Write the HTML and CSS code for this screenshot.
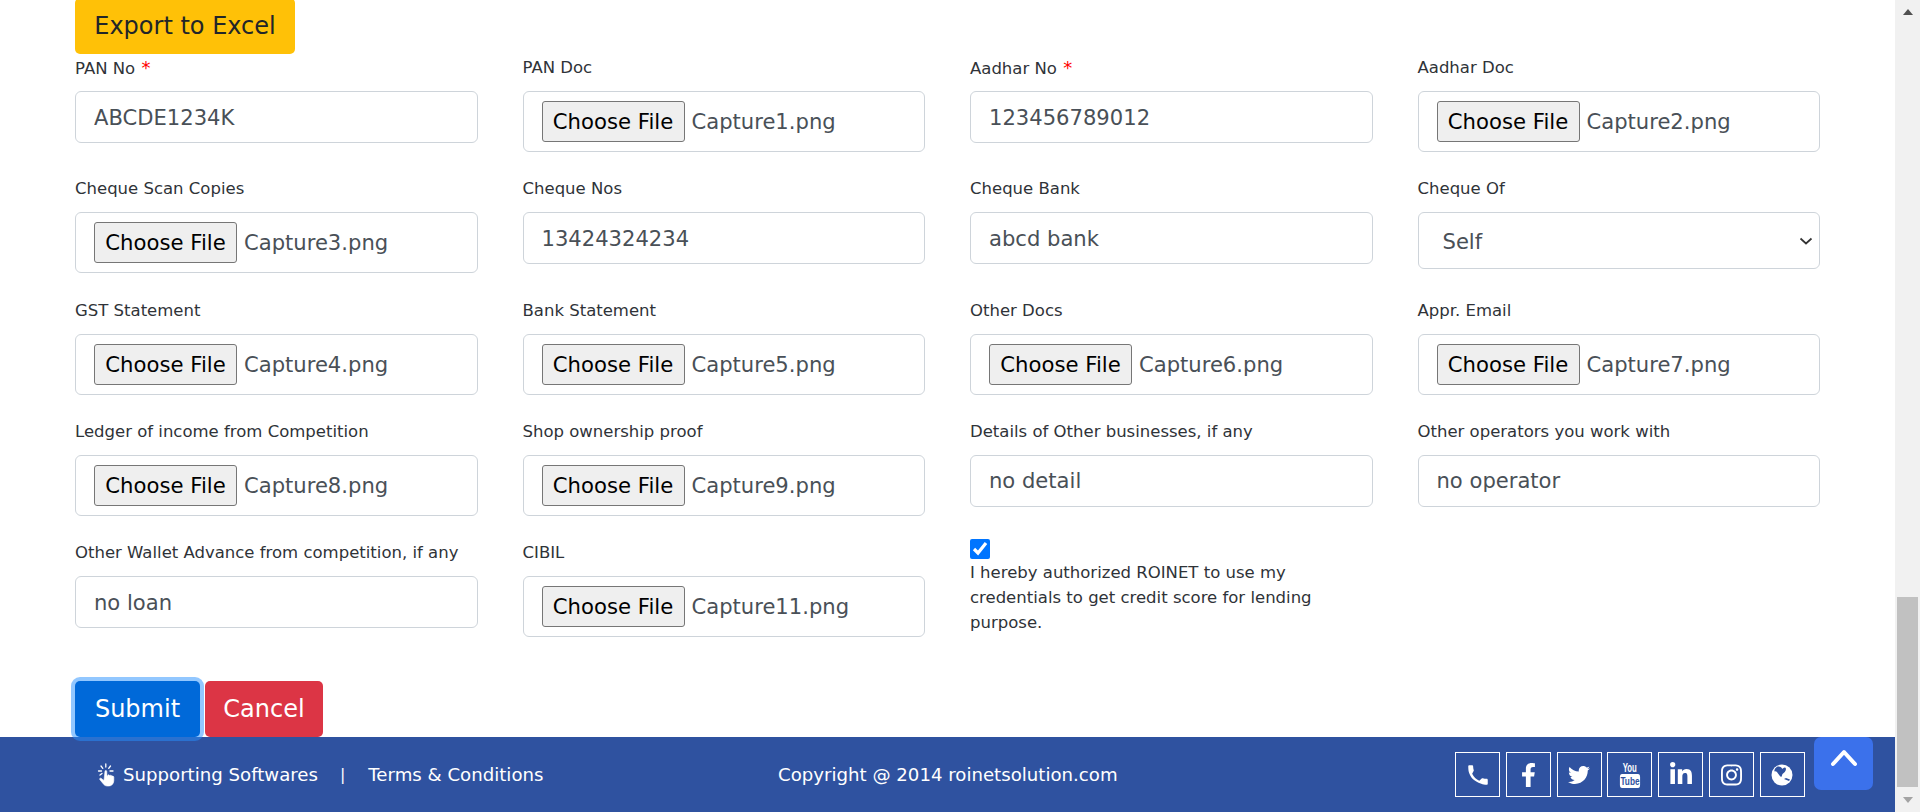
FILE: index.html
```html
<!DOCTYPE html>
<html lang="en">
<head>
<meta charset="utf-8">
<title>Form</title>
<link rel="stylesheet" href="styles.css">
</head>
<body>
<div class="page">
  <div class="main">
    <div class="content">
      <button class="btn btn-export" type="button">Export to Excel</button>
      <form class="form-grid">
        <div class="field"><label class="lbl">PAN No <span class="req">*</span></label><input class="ctl" type="text" value="ABCDE1234K"></div>
        <div class="field"><label class="lbl">PAN Doc</label><div class="file"><button class="pick" type="button">Choose File</button><span class="fname">Capture1.png</span></div></div>
        <div class="field"><label class="lbl">Aadhar No <span class="req">*</span></label><input class="ctl" type="text" value="123456789012"></div>
        <div class="field"><label class="lbl">Aadhar Doc</label><div class="file"><button class="pick" type="button">Choose File</button><span class="fname">Capture2.png</span></div></div>

        <div class="field"><label class="lbl">Cheque Scan Copies</label><div class="file"><button class="pick" type="button">Choose File</button><span class="fname">Capture3.png</span></div></div>
        <div class="field"><label class="lbl">Cheque Nos</label><input class="ctl" type="text" value="13424324234"></div>
        <div class="field"><label class="lbl">Cheque Bank</label><input class="ctl" type="text" value="abcd bank"></div>
        <div class="field"><label class="lbl">Cheque Of</label><select class="sel"><option>Self</option></select></div>

        <div class="field"><label class="lbl">GST Statement</label><div class="file"><button class="pick" type="button">Choose File</button><span class="fname">Capture4.png</span></div></div>
        <div class="field"><label class="lbl">Bank Statement</label><div class="file"><button class="pick" type="button">Choose File</button><span class="fname">Capture5.png</span></div></div>
        <div class="field"><label class="lbl">Other Docs</label><div class="file"><button class="pick" type="button">Choose File</button><span class="fname">Capture6.png</span></div></div>
        <div class="field"><label class="lbl">Appr. Email</label><div class="file"><button class="pick" type="button">Choose File</button><span class="fname">Capture7.png</span></div></div>

        <div class="field"><label class="lbl">Ledger of income from Competition</label><div class="file"><button class="pick" type="button">Choose File</button><span class="fname">Capture8.png</span></div></div>
        <div class="field"><label class="lbl">Shop ownership proof</label><div class="file"><button class="pick" type="button">Choose File</button><span class="fname">Capture9.png</span></div></div>
        <div class="field"><label class="lbl">Details of Other businesses, if any</label><input class="ctl" type="text" value="no detail"></div>
        <div class="field"><label class="lbl">Other operators you work with</label><input class="ctl" type="text" value="no operator"></div>

        <div class="field"><label class="lbl">Other Wallet Advance from competition, if any</label><input class="ctl" type="text" value="no loan"></div>
        <div class="field"><label class="lbl">CIBIL</label><div class="file"><button class="pick" type="button">Choose File</button><span class="fname">Capture11.png</span></div></div>
        <div class="field consent"><input class="chk" type="checkbox" checked><p class="consent-text">I hereby authorized ROINET to use my credentials to get credit score for lending purpose.</p></div>
      </form>
      <div class="actions">
        <button class="btn btn-submit" type="button">Submit</button>
        <button class="btn btn-cancel" type="button">Cancel</button>
      </div>
    </div>
    <footer class="footer">
      <div class="foot-left">
        <svg class="hand" viewBox="0 0 20 24" aria-hidden="true">
          <path fill="#fff" stroke="#fff" stroke-width=".6" d="M8 8.2c0-1 1.600-1 1.700 0l.3 5 .5-.1c.6-2 2-1.400 2.200-.3.700-1 2-.5 2.100.5.800-.6 2-.1 2 1v3.200c0 3-2 5.500-5 5.500h-1.500c-2 0-3.200-1-4.300-2.500L3 16.800c-.8-1-.1-2 1-1.500l3 2.200z"/>
          <path stroke="#fff" stroke-width="1.300" stroke-linecap="round" fill="none" d="M8.800 1v3M4 3l1.800 2.300M13.500 3l-1.800 2.300M1.500 8h3M13 8h3M3 12l2-1.500"/>
        </svg>
        <a class="foot-link">Supporting Softwares</a>
        <span class="sep">|</span>
        <a class="foot-link">Terms &amp; Conditions</a>
      </div>
      <div class="foot-copy">Copyright @ 2014 roinetsolution.com</div>
      <div class="foot-social">
        <a class="soc"><svg viewBox="0 0 24 24" width="26" height="26"><path fill="#fff" d="M6.620 10.790c1.440 2.830 3.760 5.140 6.590 6.590l2.200-2.200c.27-.27.67-.36 1.020-.24 1.120.37 2.330.57 3.570.57.55 0 1 .45 1 1V20c0 .55-.45 1-1 1-2 0-3.500-.3-5-1C8 18 5 14 3.600 9.500 3.200 8 3 6 3 4c0-.55.45-1 1-1h2.500c.55 0 1 .45 1 1 0 1.250.2 2.450.57 3.570.11.35.03.74-.25 1.020z"/></svg></a>
        <a class="soc"><svg viewBox="0 0 320 512" width="15" height="24"><path fill="#fff" d="M279.140 288l14.220-92.660h-88.910v-60.130c0-25.350 12.420-50.060 52.240-50.060h40.420V6.260S260.430 0 225.360 0c-73.220 0-121.080 44.380-121.080 124.720v70.620H22.890V288h81.390v224h100.170V288z"/></svg></a>
        <a class="soc"><svg viewBox="0 0 512 512" width="22" height="22"><path fill="#fff" d="M459.370 151.716c.325 4.548.325 9.097.325 13.645 0 138.720-105.583 298.558-298.558 298.558-59.452 0-114.680-17.219-161.137-47.106 8.447.974 16.568 1.299 25.340 1.299 49.055 0 94.213-16.568 130.274-44.832-46.132-.975-84.792-31.188-98.112-72.772 6.498.974 12.995 1.624 19.818 1.624 9.421 0 18.843-1.300 27.614-3.573-48.081-9.747-84.143-51.980-84.143-102.985v-1.299c13.969 7.797 30.214 12.670 47.431 13.319-28.264-18.843-46.781-51.005-46.781-87.391 0-19.492 5.197-37.360 14.294-52.954 51.655 63.675 129.300 105.258 216.365 109.807-1.624-7.797-2.599-15.918-2.599-24.040 0-57.828 46.782-104.934 104.934-104.934 30.213 0 57.502 12.670 76.670 33.137 23.715-4.548 46.456-13.320 66.599-25.340-7.798 24.366-24.366 44.833-46.132 57.827 21.117-2.273 41.584-8.122 60.426-16.243-14.292 20.791-32.161 39.308-52.628 54.253z"/></svg></a>
        <a class="soc soc-yt"><span class="yt-you">You</span><span class="yt-tube">Tube</span></a>
        <a class="soc"><svg viewBox="0 0 448 512" width="22" height="25"><path fill="#fff" d="M100.280 448H7.400V148.900h92.880zM53.790 108.100C24.090 108.100 0 83.500 0 53.800a53.790 53.790 0 0 1 107.580 0c0 29.700-24.100 54.300-53.790 54.300zM447.900 448h-92.680V302.400c0-34.700-.7-79.200-48.290-79.200-48.290 0-55.690 37.700-55.690 76.700V448h-92.780V148.900h89.080v40.800h1.300c12.400-23.500 42.690-48.300 87.880-48.300 94 0 111.280 61.900 111.280 142.300V448z"/></svg></a>
        <a class="soc"><svg viewBox="0 0 448 512" width="21" height="24"><path fill="#fff" d="M224.100 141c-63.600 0-114.900 51.300-114.900 114.900s51.300 114.900 114.900 114.900S339 319.500 339 255.900 287.700 141 224.100 141zm0 189.600c-41.100 0-74.700-33.500-74.700-74.700s33.500-74.700 74.700-74.700 74.700 33.500 74.700 74.700-33.600 74.700-74.700 74.700zm146.400-194.300c0 14.900-12 26.800-26.800 26.800-14.900 0-26.800-12-26.800-26.800s12-26.800 26.800-26.800 26.800 12 26.800 26.800zm76.100 27.200c-1.700-35.900-9.900-67.700-36.200-93.900-26.200-26.200-58-34.400-93.900-36.200-37-2.100-147.900-2.100-184.900 0-35.800 1.700-67.600 9.900-93.900 36.100s-34.400 58-36.200 93.900c-2.100 37-2.100 147.900 0 184.900 1.700 35.900 9.900 67.700 36.200 93.900s58 34.400 93.900 36.200c37 2.100 147.900 2.100 184.900 0 35.900-1.700 67.700-9.900 93.900-36.200 26.200-26.200 34.400-58 36.200-93.900 2.100-37 2.100-147.800 0-184.800zM398.800 388c-7.800 19.600-22.900 34.700-42.600 42.600-29.500 11.700-99.500 9-132.100 9s-102.700 2.600-132.100-9c-19.600-7.800-34.700-22.900-42.600-42.600-11.700-29.500-9-99.500-9-132.100s-2.600-102.700 9-132.100c7.800-19.600 22.900-34.700 42.600-42.600 29.500-11.700 99.500-9 132.100-9s102.700-2.600 132.100 9c19.600 7.800 34.700 22.900 42.600 42.600 11.700 29.500 9 99.500 9 132.100s2.700 102.700-9 132.100z"/></svg></a>
        <a class="soc"><svg viewBox="0 0 24 24" width="24" height="24"><circle cx="12" cy="12" r="10.500" fill="#fff"/><path fill="#2f52a0" d="M7.500 3.500C5 5 4 7 4.500 8.500 6 8 7 9 8 10.500c1 1.500 2 2.500 3 3.500 1-.5 1-2 1.500-3 1.500-1 3.500-3 3.500-5 0-1.500-1.500-2-2.500-1-.5.5-1 1-1.500.5C12 4.500 10 3 7.500 3.500zM14 16l5 2 1-1.500-4-1.500z"/></svg></a>
      </div>
    </footer>
  </div>
  <div class="scrollbar">
    <span class="arrow-up"></span>
    <div class="track"><div class="thumb"></div></div>
    <span class="arrow-down"></span>
  </div>
</div>
<a class="to-top"><svg viewBox="0 0 30 20" width="30" height="20"><path d="M4 17L15 5l11 12" fill="none" stroke="#fff" stroke-width="4" stroke-linecap="round" stroke-linejoin="round"/></svg></a>
</body>
</html>
```
FILE: styles.css
```css
* { box-sizing: border-box; }
html, body { margin: 0; height: 100%; overflow: hidden; }
body { font-family: "DejaVu Sans", sans-serif; font-size: 16px; color: #212529; background: #fff; }

.page { display: flex; height: 812px; }
.main { flex: 1; min-width: 0; display: flex; flex-direction: column; }
.content { flex: 1; padding: 0 75px; }

.btn { font-family: inherit; font-size: 24px; line-height: 1.5; border: 0; border-radius: 5px; display: block; padding: 0; }
.btn-export { background: #ffc107; color: #212529; width: 220px; height: 56px; margin-top: -2px; }

.form-grid { display: grid; grid-template-columns: repeat(4, 402.5px); column-gap: 45px; row-gap: 23.25px; grid-auto-rows: 98px; }
.field { display: flex; flex-direction: column; align-items: stretch; }
.lbl { display: block; height: 28px; line-height: 28px; margin-bottom: 9px; font-size: 16.5px; color: #2f3338; white-space: nowrap; }
.req { color: #f00; font-size: 18px; margin-left: 1px; }

.ctl, .sel { font-family: inherit; font-size: 21.100px; color: #495057; background: #fff; border: 1px solid #ced4da; border-radius: 6px; width: 100%; }
.ctl { height: 52px; padding: 0 18px; }
.sel { height: 57px; padding: 2px 0 0 24px; appearance: none; background-image: url("data:image/svg+xml,%3Csvg xmlns='http://www.w3.org/2000/svg' viewBox='0 0 14 8'%3E%3Cpath d='M1.500 1.500L7 6.500l5.500-5' fill='none' stroke='%23333' stroke-width='1.700'/%3E%3C/svg%3E"); background-repeat: no-repeat; background-position: right 6px center; background-size: 14px 8px; }

.file { display: flex; align-items: center; height: 61px; padding: 0 18px; border: 1px solid #ced4da; border-radius: 6px; font-size: 21.100px; color: #495057; }
.pick { font-family: inherit; font-size: 21.200px; color: #000; background: #efefef; border: 1px solid #767676; border-radius: 3px; width: 143px; height: 41px; padding: 0; margin-right: 7px; flex: none; }
.fname { white-space: nowrap; }

.consent { display: block; }
.chk { display: block; width: 20px; height: 20px; margin: 0; accent-color: #0075ff; }
.consent-text { margin: 1px 0 0; width: 350px; font-size: 16.500px; line-height: 25px; color: #2f3338; }

.actions { display: flex; gap: 5px; margin-top: 44px; }
.btn-submit { position: relative; z-index: 2; width: 125px; height: 56px; background: #0069d9; color: #fff; box-shadow: 0 0 0 4px rgba(38, 143, 255, .5); }
.btn-cancel { width: 118px; height: 56px; background: #dc3545; color: #fff; }

.footer { height: 75px; flex: none; background: #2f52a0; color: #fff; display: grid; grid-template-columns: 778px 677px auto; align-items: center; font-size: 18.150px; font-weight: 400; }
.foot-left { display: flex; align-items: center; padding-left: 97px; }
.hand { width: 20px; height: 24px; margin-right: 6px; flex: none; }
.foot-link { color: #fff; white-space: nowrap; }
.sep { margin: 0 23px 0 22px; font-size: 16px; }
.foot-copy { white-space: nowrap; }
.foot-social { display: flex; gap: 5.830px; }
.soc { width: 45px; height: 45px; border: 1.500px solid #fff; display: flex; align-items: center; justify-content: center; flex: none; }
.soc-yt { flex-direction: column; gap: 1px; font-family: "Liberation Sans", sans-serif; font-weight: 700; white-space: nowrap; }
.yt-you { display: block; font-size: 13px; line-height: 11px; color: #fff; transform: scaleX(.6); }
.yt-tube { display: block; flex: none; width: 28px; font-size: 11.500px; line-height: 14px; text-align: center; color: #2f52a0; background: #fff; border-radius: 3px; transform: scaleX(.72); }

.scrollbar { width: 25px; flex: none; background: #f1f1f1; display: flex; flex-direction: column; align-items: center; }
.track { flex: 1; width: 100%; padding: 575px 2px 0 2px; }
.thumb { height: 190px; background: #c1c1c1; }
.arrow-up, .arrow-down { display: block; flex: none; width: 0; border-left: 5.500px solid transparent; border-right: 5.500px solid transparent; }
.arrow-up { height: 0; margin: 9px 0 7px; border-bottom: 6px solid #505050; }
.arrow-down { height: 0; margin: 9px 0 9px; border-top: 6px solid #a3a3a3; }

.to-top { position: absolute; left: 1814px; top: 737px; width: 59px; height: 53px; background: #3b71eb; border-radius: 7px; display: flex; align-items: center; justify-content: center; padding-bottom: 13px; }
```
